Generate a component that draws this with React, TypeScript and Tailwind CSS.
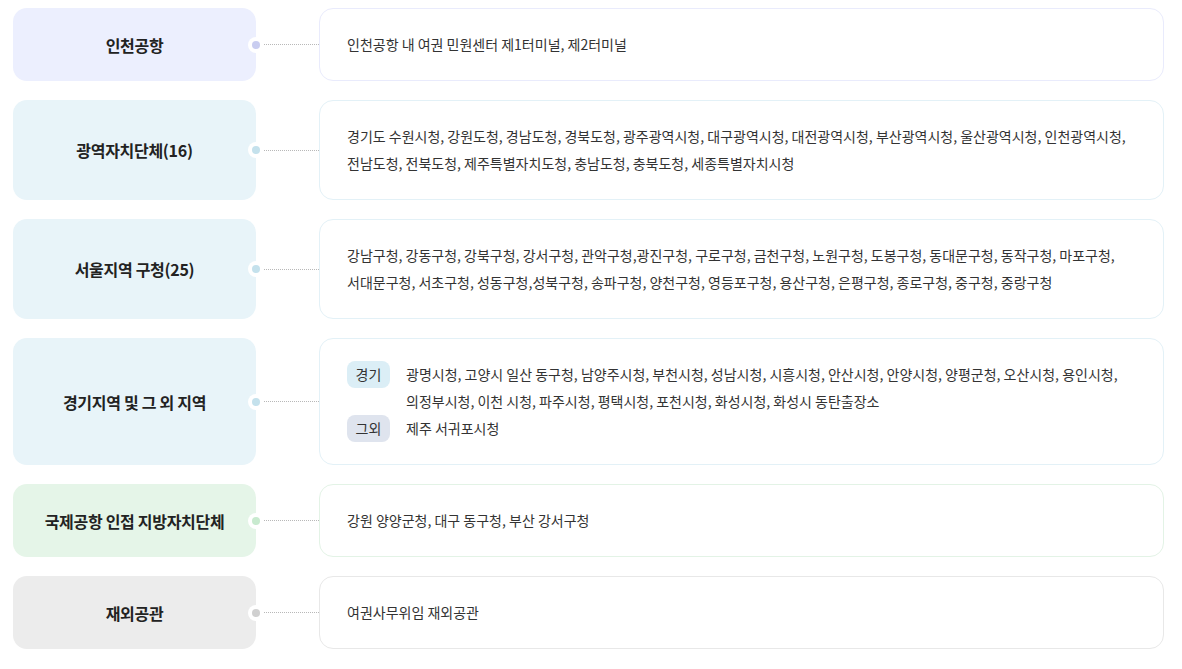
import React from 'react';

type Row = {
  title: string;
  box: string;
  dot: string;
  border: string;
  body: React.ReactNode;
};

const rows: Row[] = [
  {
    title: '인천공항',
    box: 'bg-[#eceffe]',
    dot: 'bg-[#c9cdf0]',
    border: 'border-[#e9ebfc]',
    body: '인천공항 내 여권 민원센터 제1터미널, 제2터미널',
  },
  {
    title: '광역자치단체(16)',
    box: 'bg-[#e8f4f9]',
    dot: 'bg-[#c4e1ec]',
    border: 'border-[#e3f1f7]',
    body: '경기도 수원시청, 강원도청, 경남도청, 경북도청, 광주광역시청, 대구광역시청, 대전광역시청, 부산광역시청, 울산광역시청, 인천광역시청, 전남도청, 전북도청, 제주특별자치도청, 충남도청, 충북도청, 세종특별자치시청',
  },
  {
    title: '서울지역 구청(25)',
    box: 'bg-[#e8f4f9]',
    dot: 'bg-[#c4e1ec]',
    border: 'border-[#e3f1f7]',
    body: '강남구청, 강동구청, 강북구청, 강서구청, 관악구청,광진구청, 구로구청, 금천구청, 노원구청, 도봉구청, 동대문구청, 동작구청, 마포구청, 서대문구청, 서초구청, 성동구청,성북구청, 송파구청, 양천구청, 영등포구청, 용산구청, 은평구청, 종로구청, 중구청, 중랑구청',
  },
  {
    title: '경기지역 및 그 외 지역',
    box: 'bg-[#e8f4f9]',
    dot: 'bg-[#c4e1ec]',
    border: 'border-[#e3f1f7]',
    body: (
      <div className="grid grid-cols-[43px_1fr] gap-x-4">
        <span className="h-[27px] rounded-lg bg-[#dbeef6] flex items-center justify-center">경기</span>
        <p>
          광명시청, 고양시 일산 동구청, 남양주시청, 부천시청, 성남시청, 시흥시청, 안산시청, 안양시청, 양평군청, 오산시청, 용인시청,
          의정부시청, 이천 시청, 파주시청, 평택시청, 포천시청, 화성시청, 화성시 동탄출장소
        </p>
        <span className="h-[27px] rounded-lg bg-[#dfe4ee] flex items-center justify-center">그외</span>
        <p>제주 서귀포시청</p>
      </div>
    ),
  },
  {
    title: '국제공항 인접 지방자치단체',
    box: 'bg-[#e5f5e8]',
    dot: 'bg-[#c8eacf]',
    border: 'border-[#e3f3e6]',
    body: '강원 양양군청, 대구 동구청, 부산 강서구청',
  },
  {
    title: '재외공관',
    box: 'bg-[#ececec]',
    dot: 'bg-[#d0d0d0]',
    border: 'border-[#e8e8e8]',
    body: '여권사무위임 재외공관',
  },
];

export default function App() {
  return (
    <div
      className="min-h-screen bg-white pt-[8px] pl-[13px] pr-[18px] flex flex-col gap-[19px]"
      style={{ fontFamily: '"Noto Sans CJK KR", "Noto Sans", sans-serif' }}
    >
      {rows.map((r) => (
        <div key={r.title} className="flex items-stretch">
          <div
            className={`relative w-[243px] shrink-0 rounded-[14px] ${r.box} flex items-center justify-center text-[16px] font-bold text-[#222] tracking-[-0.3px]`}
          >
            {r.title}
            <span className="absolute right-[-8px] top-1/2 -translate-y-1/2 w-4 h-4 rounded-full bg-white flex items-center justify-center">
              <span className={`w-2 h-2 rounded-full ${r.dot}`} />
            </span>
          </div>
          <div className="w-[63px] shrink-0 flex items-center pl-[8px]">
            <div className="w-full border-t border-dotted border-[#b8b8b8]" />
          </div>
          <div
            className={`flex-1 rounded-[14px] border ${r.border} bg-white px-[27px] py-[22px] text-[14px] leading-[27px] text-[#333] break-keep`}
          >
            {r.body}
          </div>
        </div>
      ))}
    </div>
  );
}
